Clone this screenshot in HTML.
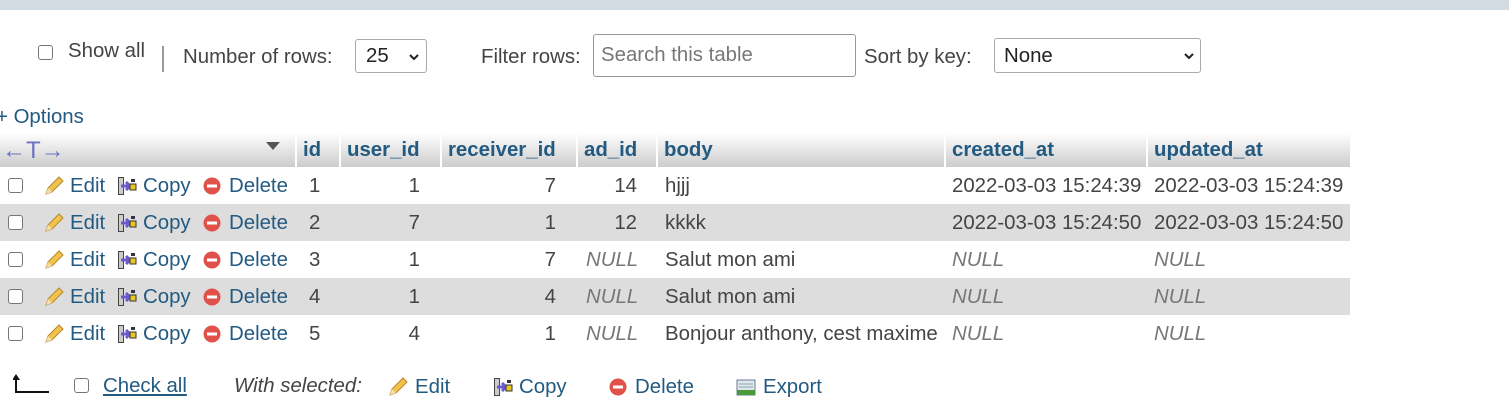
<!DOCTYPE html>
<html><head><meta charset="utf-8"><style>
*{margin:0;padding:0;box-sizing:border-box}
body{width:1509px;height:400px;overflow:hidden;background:#fff;font-family:"Liberation Sans",Arial,sans-serif;font-size:20.4px;color:#444;position:relative}
.a{position:absolute;white-space:nowrap}
.lk{color:#235a81}
.cb{position:absolute;width:15px;height:15px;border:1px solid #767676;border-radius:3px;background:#fff}
.sel{position:absolute;border:1px solid #aaa;border-radius:3px;background:#fff}
table{position:absolute;left:0;top:133px;border-collapse:collapse}
th{height:34px;padding:0 6px;white-space:nowrap;background:linear-gradient(#fff,#ccc);border-left:2px solid #fff;color:#235a81;text-align:left;font-weight:bold}
th:first-child{border-left:none}
.n{font-style:italic;color:#777}
</style></head><body>
<div class="a" style="left:0;top:0;width:1509px;height:10px;background:#d3dce3"></div>
<div class="cb" style="left:38px;top:45px"></div>
<div class="a" style="left:68px;top:40px">Show all</div>
<div class="a" style="left:162px;top:46px;width:2px;height:26px;background:#999"></div>
<div class="a" style="left:183px;top:46px">Number of rows:</div>
<div class="sel" style="left:355px;top:39px;width:72px;height:34px"><span class="a" style="left:10px;top:5px;color:#222">25</span><svg class="a" style="left:52px;top:12px" width="12" height="10"><path d="M2 3l4 4 4-4" stroke="#222" stroke-width="2" fill="none"/></svg></div>
<div class="a" style="left:481px;top:46px">Filter rows:</div>
<div class="sel" style="left:593px;top:34px;width:263px;height:43px;border-color:#999"><span class="a" style="left:7px;top:9px;color:#777">Search this table</span></div>
<div class="a" style="left:864px;top:46px">Sort by key:</div>
<div class="sel" style="left:994px;top:38px;width:207px;height:35px"><span class="a" style="left:9px;top:6px;color:#222">None</span><svg class="a" style="left:188px;top:12px" width="12" height="10"><path d="M2 3l4 4 4-4" stroke="#222" stroke-width="2" fill="none"/></svg></div>
<div class="a lk" style="left:-4px;top:106px">+ Options</div>

<svg width="0" height="0" style="position:absolute"><defs>
<g id="pen"><path d="M2 19l2-6L15 2l4 4L8 17z" fill="#f0c34a" stroke="#b8862b" stroke-width="1"/><path d="M2 19l2-6 4 4z" fill="#f3dfb0"/></g>
<g id="cp"><rect x="1" y="2" width="6" height="18" fill="#444"/><rect x="2" y="3" width="4" height="16" fill="#ccc"/><path d="M4 11h8M9 7l4 4-4 4" stroke="#6a5acd" stroke-width="3" fill="none"/><rect x="14" y="4" width="4" height="3" fill="#334"/><rect x="13" y="9" width="6" height="6" fill="#e8c820" stroke="#333"/></g>
<g id="del"><circle cx="10" cy="11" r="8.5" fill="#e0514a"/><rect x="5" y="9.5" width="10" height="3" fill="#fff"/></g>
</defs></svg>

<table>
<tr><th style="width:296px;position:relative"><span class="a" style="left:2px;top:4px;color:#6c71c4;font-weight:normal;font-size:24px">←T→</span><svg class="a" style="left:266px;top:8px" width="14" height="10"><path d="M0 1h14L7 9z" fill="#555"/></svg></th>
<th style="width:44px">id</th><th style="width:101px">user_id</th><th style="width:136px">receiver_id</th><th style="width:80px">ad_id</th><th style="width:288px">body</th><th style="width:202px">created_at</th><th style="width:203px">updated_at</th></tr>
</table>
<div id="rows"></div>
<script>
var d=[["1","1","7","14","hjjj","2022-03-03 15:24:39","2022-03-03 15:24:39"],["2","7","1","12","kkkk","2022-03-03 15:24:50","2022-03-03 15:24:50"],["3","1","7",null,"Salut mon ami",null,null],["4","1","4",null,"Salut mon ami",null,null],["5","4","1",null,"Bonjour anthony, cest maxime",null,null]];
var h='';
d.forEach(function(r,i){var y=167+i*37;
h+='<div class="a" style="left:0;top:'+y+'px;width:1350px;height:37px;background:'+(i%2?'#ddd':'#fff')+'"></div>';
var t=y+8;
h+='<div class="cb" style="left:8px;top:'+(y+11)+'px"></div>';
h+='<svg class="a" style="left:44px;top:'+(y+8)+'px" width="22" height="22"><use href="#pen"/></svg><span class="a lk" style="left:70px;top:'+t+'px">Edit</span>';
h+='<svg class="a" style="left:117px;top:'+(y+8)+'px" width="22" height="22"><use href="#cp"/></svg><span class="a lk" style="left:143px;top:'+t+'px">Copy</span>';
h+='<svg class="a" style="left:202px;top:'+(y+8)+'px" width="22" height="22"><use href="#del"/></svg><span class="a lk" style="left:229px;top:'+t+'px">Delete</span>';
h+='<span class="a" style="left:309px;top:'+t+'px">'+r[0]+'</span>';
h+='<span class="a" style="right:'+(1509-420)+'px;top:'+t+'px">'+r[1]+'</span>';
h+='<span class="a" style="right:'+(1509-556)+'px;top:'+t+'px">'+r[2]+'</span>';
h+=r[3]?'<span class="a" style="right:'+(1509-637)+'px;top:'+t+'px">'+r[3]+'</span>':'<span class="a n" style="left:586px;top:'+t+'px">NULL</span>';
h+='<span class="a" style="left:665px;top:'+t+'px">'+r[4]+'</span>';
h+=r[5]?'<span class="a" style="left:952px;top:'+t+'px">'+r[5]+'</span>':'<span class="a n" style="left:952px;top:'+t+'px">NULL</span>';
h+=r[6]?'<span class="a" style="left:1154px;top:'+t+'px">'+r[6]+'</span>':'<span class="a n" style="left:1154px;top:'+t+'px">NULL</span>';
});
document.getElementById('rows').innerHTML=h;
</script>
<svg class="a" style="left:13px;top:372px" width="36" height="22"><path d="M2 20h34M3 20V5" stroke="#111" stroke-width="2"/><path d="M-1 8l4-6 4 6z" fill="#111"/></svg>
<div class="cb" style="left:74px;top:378px"></div>
<div class="a lk" style="left:103px;top:375px;text-decoration:underline">Check all</div>
<div class="a" style="left:234px;top:375px;font-style:italic">With selected:</div>
<svg class="a" style="left:388px;top:376px" width="22" height="22"><use href="#pen"/></svg><div class="a lk" style="left:415px;top:376px">Edit</div>
<svg class="a" style="left:493px;top:376px" width="22" height="22"><use href="#cp"/></svg><div class="a lk" style="left:519px;top:376px">Copy</div>
<svg class="a" style="left:608px;top:376px" width="22" height="22"><use href="#del"/></svg><div class="a lk" style="left:635px;top:376px">Delete</div>
<svg class="a" style="left:736px;top:378px" width="21" height="19"><rect x="1" y="2" width="18" height="15" fill="#dfe6ee" stroke="#6a7c96"/><path d="M3 6h14M3 9h14" stroke="#8aa"/><rect x="1" y="12" width="18" height="5" fill="#4a9a3a"/></svg><div class="a lk" style="left:763px;top:376px">Export</div>
</body></html>
